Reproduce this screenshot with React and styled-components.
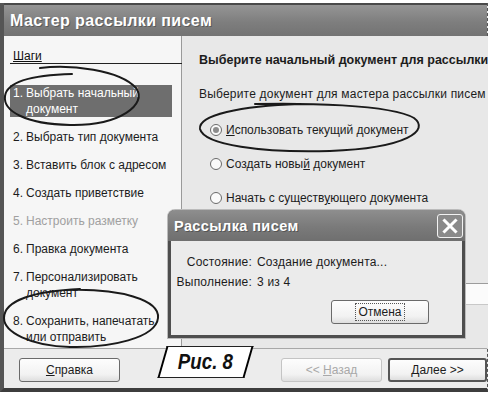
import React from "react";
import styled, { createGlobalStyle } from "styled-components";

const GlobalStyle = createGlobalStyle`
  html, body { margin: 0; padding: 0; background: #fff; }
  body {
    font-family: "Liberation Sans", Arial, sans-serif;
    font-size: 12px;
    color: #1c1c1c;
  }
`;

const Page = styled.div`
  position: relative;
  width: 495px;
  height: 394px;
  padding-top: 3px;
  box-sizing: border-box;
  background: #fff;
  overflow: hidden;
`;

const Window = styled.div`
  width: 488px;
  height: 389px;
  box-sizing: border-box;
  display: flex;
  flex-direction: column;
  border-left: 4px solid #555;
  border-bottom: 4px solid #3d3d3d;
  border-right: 1px dashed #555;
  background: #ebebeb;
`;

const TitleBar = styled.div`
  height: 33px;
  flex: none;
  box-sizing: border-box;
  display: flex;
  align-items: center;
  padding-left: 6px;
  background: linear-gradient(#959595, #7e7e7e 55%, #737373);
  border-top: 2px solid #4a4a4a;
  color: #fff;
  font-weight: bold;
  font-size: 16px;
  letter-spacing: 0.4px;
  text-shadow: 1px 1px 0 #5a5a5a;
`;

const Body = styled.div`
  height: 312px;
  flex: none;
  display: flex;
`;

const LeftPanel = styled.div`
  width: 178px;
  box-sizing: border-box;
  flex: none;
  background: #f6f6f6;
  border-right: 1px solid #9a9a9a;
  padding: 13px 0 0 6px;
`;

const StepsHeader = styled.div`
  width: 170px;
  line-height: 14px;
  padding-left: 3px;
  border-bottom: 1px solid #222;
  text-decoration: underline;
  color: #111;
`;

const StepList = styled.div`
  margin-top: 21px;
  display: flex;
  flex-direction: column;
  gap: 12px;
  width: 162px;
`;

const Step = styled.div`
  display: grid;
  grid-template-columns: 10px 1fr;
  column-gap: 3px;
  line-height: 16px;
  padding: 0 3px;
  background: ${(p) => (p.$active ? "#6e6e6e" : "transparent")};
  color: ${(p) => (p.$active ? "#fff" : p.$disabled ? "#a0a0a0" : "#1c1c1c")};
`;

const RightPanel = styled.div`
  flex: 1;
  background: #e8e8e8;
  padding: 16px 0 0 17px;
  display: flex;
  flex-direction: column;
`;

const Heading = styled.div`
  font-weight: bold;
  font-size: 12.5px;
  line-height: 16px;
  white-space: nowrap;
`;

const SubText = styled.div`
  margin-top: 18px;
  line-height: 16px;
  white-space: nowrap;
  letter-spacing: 0.2px;
`;

const RadioGroup = styled.div`
  margin-top: 20px;
  padding-left: 11px;
  display: flex;
  flex-direction: column;
  gap: 18px;
`;

const RadioRow = styled.div`
  display: flex;
  align-items: center;
  gap: 4px;
  line-height: 16px;
`;

const RadioDot = styled.span`
  width: 12px;
  height: 12px;
  box-sizing: border-box;
  border-radius: 50%;
  border: 1px solid #6a6a6a;
  background: #fafafa;
  display: flex;
  align-items: center;
  justify-content: center;
  &::after {
    content: "";
    width: 6px;
    height: 6px;
    border-radius: 50%;
    background: ${(p) => (p.$checked ? "#8c8c8c" : "transparent")};
  }
`;

const HiddenField = styled.div`
  margin-top: 77px;
  height: 20px;
  background: #fbfbfb;
  border-top: 1px solid #9c9c9c;
  border-bottom: 1px solid #c8c8c8;
`;

const Footer = styled.div`
  flex: 1;
  display: flex;
  align-items: center;
  padding: 2px 0 0 15px;
  background: #ececec;
  border-top: 1px solid #a8a8a8;
`;

const Button = styled.div`
  width: ${(p) => p.$w || 101}px;
  height: 24px;
  box-sizing: border-box;
  display: flex;
  align-items: center;
  justify-content: center;
  border-radius: 3px;
  border: ${(p) => (p.$default ? "2px solid #555" : p.$disabled ? "1px solid #c4c4c4" : "1px solid #6a6a6a")};
  background: linear-gradient(#fdfdfd, #f2f2f2 70%, #dedede);
  color: ${(p) => (p.$disabled ? "#a8a8a8" : "#1c1c1c")};
  margin-left: ${(p) => p.$ml || 0}px;
`;

const FocusText = styled.span`
  padding: 1px 2px;
  outline: 1px dotted #555;
`;

const Spacer = styled.div`
  flex: 1;
`;

const Modal = styled.div`
  position: absolute;
  left: 168px;
  top: 210px;
  width: 297px;
  height: 128px;
  box-sizing: border-box;
  display: flex;
  flex-direction: column;
  background: #ebebeb;
  border: 3px solid #4e4e4e;
  border-top: none;
  border-radius: 7px 7px 0 0;
  box-shadow: 0 0 0 1px #bbb;
`;

const ModalTitle = styled.div`
  height: 31px;
  flex: none;
  display: flex;
  align-items: center;
  justify-content: space-between;
  padding: 0 2px 0 6px;
  margin: 0 -3px;
  border-radius: 7px 7px 0 0;
  background: linear-gradient(#8e8e8e, #7a7a7a 55%, #6f6f6f);
  color: #fff;
  font-weight: bold;
  font-size: 14.5px;
  letter-spacing: 0.4px;
  text-shadow: 1px 1px 0 #555;
`;

const CloseButton = styled.div`
  width: 26px;
  height: 24px;
  box-sizing: border-box;
  border: 1px solid #f2f2f2;
  border-radius: 3px;
  background: #8a8a8a;
  display: flex;
  align-items: center;
  justify-content: center;
`;

const StatusGrid = styled.div`
  margin-top: 13px;
  display: grid;
  grid-template-columns: 81px 1fr;
  column-gap: 5px;
  row-gap: 4px;
  line-height: 16px;
  letter-spacing: 0.2px;
`;

const StatusLabel = styled.div`
  text-align: right;
`;

const ModalActions = styled.div`
  margin-top: 10px;
  display: flex;
  justify-content: flex-end;
  padding-right: 33px;
`;

const Caption = styled.div`
  position: absolute;
  left: 162px;
  top: 346px;
  width: 87px;
  height: 32px;
  box-sizing: border-box;
  transform: skewX(-16deg);
  background: #fff;
  border: 1px solid #222;
  border-left: 2px solid #000;
  border-right: 2px solid #000;
  display: flex;
  align-items: center;
  justify-content: center;
`;

const CaptionText = styled.span`
  display: inline-block;
  transform: skewX(16deg) scaleX(0.85);
  font-weight: bold;
  font-style: italic;
  font-size: 22px;
  color: #111;
`;

const Annotations = styled.svg`
  position: absolute;
  left: 0;
  top: 0;
  pointer-events: none;
`;

const steps = [
  { n: "1.", t: "Выбрать начальный документ", active: true },
  { n: "2.", t: "Выбрать тип документа" },
  { n: "3.", t: "Вставить блок с адресом" },
  { n: "4.", t: "Создать приветствие" },
  { n: "5.", t: "Настроить разметку", disabled: true },
  { n: "6.", t: "Правка документа" },
  { n: "7.", t: "Персонализировать документ" },
  { n: "8.", t: "Сохранить, напечатать или отправить" },
];

export default function App() {
  return (
    <Page>
      <GlobalStyle />
      <Window>
        <TitleBar>Мастер рассылки писем</TitleBar>
        <Body>
          <LeftPanel>
            <StepsHeader>Шаги</StepsHeader>
            <StepList>
              {steps.map((s) => (
                <Step key={s.n} $active={s.active} $disabled={s.disabled}>
                  <span>{s.n}</span>
                  <span>{s.t}</span>
                </Step>
              ))}
            </StepList>
          </LeftPanel>
          <RightPanel>
            <Heading>Выберите начальный документ для рассылки</Heading>
            <SubText>Выберите документ для мастера рассылки писем</SubText>
            <RadioGroup>
              <RadioRow>
                <RadioDot $checked />
                <span>
                  <u>И</u>спользовать текущий документ
                </span>
              </RadioRow>
              <RadioRow>
                <RadioDot />
                <span>
                  Создать новы<u>й</u> документ
                </span>
              </RadioRow>
              <RadioRow>
                <RadioDot />
                <span>
                  Начать с существ<u>у</u>ющего документа
                </span>
              </RadioRow>
            </RadioGroup>
            <HiddenField />
          </RightPanel>
        </Body>
        <Footer>
          <Button $w={101}>
            <span>
              <u>С</u>правка
            </span>
          </Button>
          <Spacer />
          <Button $w={101} $disabled>
            <span>
              &lt;&lt; <u>Н</u>азад
            </span>
          </Button>
          <Button $w={99} $default $ml={6}>
            <span>
              <u>Д</u>алее &gt;&gt;
            </span>
          </Button>
        </Footer>
      </Window>

      <Modal>
        <ModalTitle>
          <span>Рассылка писем</span>
          <CloseButton>
            <svg width="16" height="16" viewBox="0 0 16 16">
              <path d="M2.5 2.5 L13.5 13.5 M13.5 2.5 L2.5 13.5" stroke="#fff" strokeWidth="3" strokeLinecap="square" />
            </svg>
          </CloseButton>
        </ModalTitle>
        <StatusGrid>
          <StatusLabel>Состояние:</StatusLabel>
          <div>Создание документа...</div>
          <StatusLabel>Выполнение:</StatusLabel>
          <div>3 из 4</div>
        </StatusGrid>
        <ModalActions>
          <Button $w={98}>
            <FocusText>Отмена</FocusText>
          </Button>
        </ModalActions>
      </Modal>

      <Caption>
        <CaptionText>Рис. 8</CaptionText>
      </Caption>

      <Annotations width="495" height="394" viewBox="0 0 495 394">
        <g fill="none" stroke="#1a1a1a" strokeWidth="2" strokeLinecap="round">
          <path d="M40 68 C70 64, 120 70, 136 88 C148 104, 120 126, 70 125 C25 124, 3 111, 5 96 C7 82, 30 75, 72 74" />
          <path d="M255 104 C300 103, 390 104, 414 118 C430 130, 408 148, 330 151 C262 153, 204 145, 200 129 C198 115, 240 106, 300 104" />
          <path d="M66 290 C120 288, 160 300, 158 318 C156 338, 110 348, 70 347 C30 346, 4 332, 4 318 C4 300, 35 291, 80 289" />
        </g>
      </Annotations>
    </Page>
  );
}
